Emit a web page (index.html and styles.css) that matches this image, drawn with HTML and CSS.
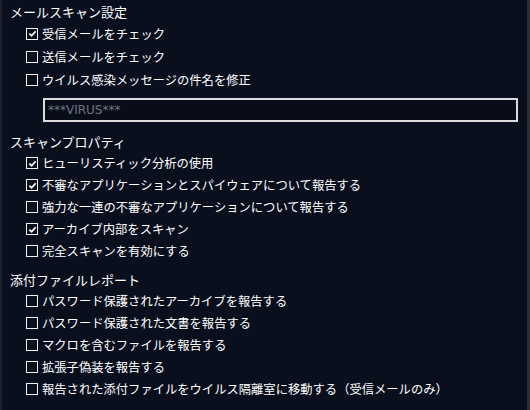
FILE: index.html
```html
<!DOCTYPE html>
<html>
<head>
<meta charset="utf-8">
<link rel="stylesheet" href="styles.css">
</head>
<body>

<div class="panel">
  <div class="group_title">メールスキャン設定</div>
  <div class="option tall"><span class="box checked"><svg viewBox="0 0 10 10"><path d="M1.5 5.2 L4 7.5 L8.5 2.5" /></svg></span>受信メールをチェック</div>
  <div class="option tall"><span class="box"></span>送信メールをチェック</div>
  <div class="option tall"><span class="box"></span>ウイルス感染メッセージの件名を修正</div>
  <div class="subject_box">***VIRUS***</div>

  <div class="group_title second">スキャンプロパティ</div>
  <div class="option"><span class="box checked"><svg viewBox="0 0 10 10"><path d="M1.5 5.2 L4 7.5 L8.5 2.5" /></svg></span>ヒューリスティック分析の使用</div>
  <div class="option"><span class="box checked"><svg viewBox="0 0 10 10"><path d="M1.5 5.2 L4 7.5 L8.5 2.5" /></svg></span>不審なアプリケーションとスパイウェアについて報告する</div>
  <div class="option"><span class="box"></span>強力な一連の不審なアプリケーションについて報告する</div>
  <div class="option"><span class="box checked"><svg viewBox="0 0 10 10"><path d="M1.5 5.2 L4 7.5 L8.5 2.5" /></svg></span>アーカイブ内部をスキャン</div>
  <div class="option"><span class="box"></span>完全スキャンを有効にする</div>

  <div class="group_title third">添付ファイルレポート</div>
  <div class="option"><span class="box"></span>パスワード保護されたアーカイブを報告する</div>
  <div class="option"><span class="box"></span>パスワード保護された文書を報告する</div>
  <div class="option"><span class="box"></span>マクロを含むファイルを報告する</div>
  <div class="option"><span class="box"></span>拡張子偽装を報告する</div>
  <div class="option"><span class="box"></span>報告された添付ファイルをウイルス隔離室に移動する（受信メールのみ）</div>
</div>

</body>
</html>
```

FILE: styles.css
```css
html, body {
  margin: 0;
  height: 100%;
}

body {
  background-color: #0a0f1e;
  color: #ffffff;
  font-family: "Noto Sans CJK JP", "Noto Sans", sans-serif;
  overflow: hidden;
}

.panel {
  box-sizing: border-box;
  height: 410px;
  border-left: 2px solid #1d2129;
  border-right: 3px solid #2b2f36;
  padding-top: 2px;
}

.group_title {
  height: 20px;
  line-height: 20px;
  padding-left: 8px;
  font-size: 13px;
}

.group_title.second {
  margin-top: 10px;
}

.group_title.third {
  margin-top: 8px;
}

.option {
  display: flex;
  align-items: center;
  gap: 4px;
  height: 22px;
  padding-left: 24px;
  font-size: 12.3px;
  white-space: nowrap;
}

.option.tall {
  height: 23px;
}

.box {
  box-sizing: border-box;
  width: 12px;
  height: 12px;
  border: 1.5px solid #f2f2f2;
  display: flex;
  align-items: center;
  justify-content: center;
}

.box svg {
  width: 9px;
  height: 9px;
}

.box svg path {
  fill: none;
  stroke: #ffffff;
  stroke-width: 2;
}

.subject_box {
  box-sizing: border-box;
  margin: 7px 0 0 41px;
  width: 475px;
  height: 24px;
  border: 2px solid #dcdcdc;
  background-color: #080d19;
  color: #6f7680;
  font-family: "DejaVu Sans", sans-serif;
  font-size: 12px;
  line-height: 20px;
  padding-left: 3px;
}
```
